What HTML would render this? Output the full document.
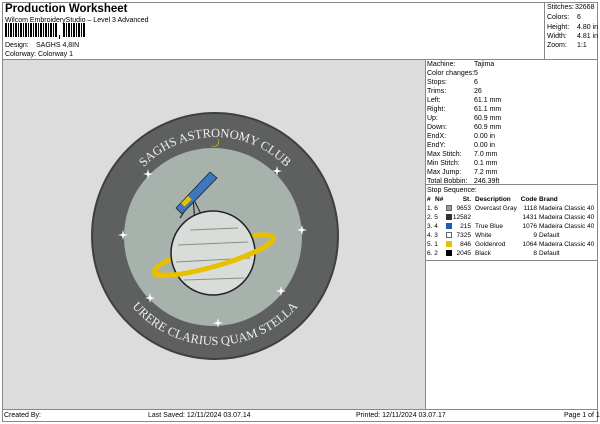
<!DOCTYPE html>
<html><head><meta charset="utf-8"><style>
*{margin:0;padding:0;box-sizing:border-box}
body{width:600px;height:424px;background:#fff;position:relative;overflow:hidden;font-family:"Liberation Sans",sans-serif;color:#000;font-size:7px}
.a{position:absolute;white-space:nowrap;line-height:9px}
.ln{position:absolute;background:#888}
.r{text-align:right}
.sm{font-size:6.5px}
</style></head><body>
<div class="ln" style="left:2px;top:2px;width:596px;height:1px"></div>
<div class="ln" style="left:2px;top:2px;width:1px;height:420px"></div>
<div class="ln" style="left:597px;top:2px;width:1px;height:420px"></div>
<div class="ln" style="left:2px;top:421px;width:596px;height:1px"></div>
<div class="ln" style="left:2px;top:59px;width:596px;height:1px"></div>
<div class="ln" style="left:2px;top:409px;width:596px;height:1px"></div>
<div class="ln" style="left:544px;top:2px;width:1px;height:57px"></div>
<div style="position:absolute;left:3px;top:60px;width:422px;height:349px;background:#dcdcdc"></div>
<div class="ln" style="left:425px;top:60px;width:1px;height:349px"></div>

<div class="a" style="left:5px;top:3px;font-size:11.5px;font-weight:bold;line-height:13px">Production Worksheet</div>
<div class="a" style="left:5px;top:16px">Wilcom EmbroideryStudio – Level 3 Advanced</div>
<svg style="position:absolute;left:5px;top:23px" width="82" height="16">
<g fill="#000">
<rect x="0" y="0" width="2" height="14"/><rect x="3" y="0" width="1" height="14"/><rect x="5" y="0" width="2" height="14"/><rect x="8" y="0" width="1" height="14"/><rect x="10" y="0" width="2" height="14"/><rect x="13" y="0" width="1" height="14"/><rect x="15" y="0" width="2" height="14"/><rect x="18" y="0" width="1" height="14"/><rect x="20" y="0" width="2" height="14"/><rect x="23" y="0" width="1" height="14"/><rect x="25" y="0" width="2" height="14"/><rect x="28" y="0" width="1" height="14"/><rect x="30" y="0" width="2" height="14"/><rect x="33" y="0" width="1" height="14"/><rect x="35" y="0" width="2" height="14"/><rect x="38" y="0" width="1" height="14"/><rect x="40" y="0" width="2" height="14"/><rect x="43" y="0" width="1" height="14"/><rect x="45" y="0" width="2" height="14"/><rect x="48" y="0" width="1" height="14"/><rect x="50" y="0" width="2" height="14"/><rect x="54" y="12" width="1" height="4"/><rect x="58" y="0" width="2" height="14"/><rect x="61" y="0" width="1" height="14"/><rect x="63" y="0" width="2" height="14"/><rect x="66" y="0" width="1" height="14"/><rect x="68" y="0" width="2" height="14"/><rect x="71" y="0" width="1" height="14"/><rect x="73" y="0" width="2" height="14"/><rect x="76" y="0" width="1" height="14"/><rect x="78" y="0" width="2" height="14"/>
</g></svg>
<div class="a" style="left:5px;top:41px">Design:</div><div class="a" style="left:36px;top:41px">SAGHS 4,8IN</div>
<div class="a" style="left:5px;top:50px">Colorway:</div><div class="a" style="left:38px;top:50px">Colorway 1</div>

<div class="a" style="left:547px;top:3px">Stitches:</div><div class="a" style="left:575px;top:3px">32668</div>
<div class="a" style="left:547px;top:13px">Colors:</div><div class="a" style="left:577px;top:13px">6</div>
<div class="a" style="left:547px;top:23px">Height:</div><div class="a" style="left:577px;top:23px">4.80 in</div>
<div class="a" style="left:547px;top:32px">Width:</div><div class="a" style="left:577px;top:32px">4.81 in</div>
<div class="a" style="left:547px;top:41px">Zoom:</div><div class="a" style="left:577px;top:41px">1:1</div>

<div style="position:absolute;left:427px;top:60px">
<div class="a" style="left:0;top:0">Machine:</div><div class="a" style="left:47px;top:0">Tajima</div>
<div class="a" style="left:0;top:9px">Color changes:</div><div class="a" style="left:47px;top:9px">5</div>
<div class="a" style="left:0;top:18px">Stops:</div><div class="a" style="left:47px;top:18px">6</div>
<div class="a" style="left:0;top:27px">Trims:</div><div class="a" style="left:47px;top:27px">26</div>
<div class="a" style="left:0;top:36px">Left:</div><div class="a" style="left:47px;top:36px">61.1 mm</div>
<div class="a" style="left:0;top:45px">Right:</div><div class="a" style="left:47px;top:45px">61.1 mm</div>
<div class="a" style="left:0;top:54px">Up:</div><div class="a" style="left:47px;top:54px">60.9 mm</div>
<div class="a" style="left:0;top:63px">Down:</div><div class="a" style="left:47px;top:63px">60.9 mm</div>
<div class="a" style="left:0;top:72px">EndX:</div><div class="a" style="left:47px;top:72px">0.00 in</div>
<div class="a" style="left:0;top:81px">EndY:</div><div class="a" style="left:47px;top:81px">0.00 in</div>
<div class="a" style="left:0;top:90px">Max Stitch:</div><div class="a" style="left:47px;top:90px">7.0 mm</div>
<div class="a" style="left:0;top:99px">Min Stitch:</div><div class="a" style="left:47px;top:99px">0.1 mm</div>
<div class="a" style="left:0;top:108px">Max Jump:</div><div class="a" style="left:47px;top:108px">7.2 mm</div>
<div class="a" style="left:0;top:117px">Total Bobbin:</div><div class="a" style="left:47px;top:117px">246.39ft</div>
</div>
<div class="ln" style="left:426px;top:184px;width:172px;height:1px"></div>
<div class="a" style="left:427px;top:186px">Stop Sequence:</div>
<div class="sm" style="position:absolute;left:427px;top:195px;font-weight:bold;text-decoration:underline">
<div class="a" style="left:0">#</div><div class="a" style="left:8px">N#</div><div class="a r" style="left:24px;width:20px">St.</div><div class="a" style="left:48px">Description</div><div class="a r" style="left:90px;width:20px">Code</div><div class="a" style="left:112px">Brand</div>
</div>
<div class="sm" style="position:absolute;left:427px;top:204px">
<div class="a" style="left:0;top:0">1. 6</div><div style="position:absolute;left:19px;top:1px;width:6px;height:6px;background:#999;border:1px solid #666"></div><div class="a r" style="left:19px;top:0;width:25px">9653</div><div class="a" style="left:48px;top:0">Overcast Gray</div><div class="a r" style="left:85px;top:0;width:25px">1118</div><div class="a" style="left:112px;top:0">Madeira Classic 40</div>
<div class="a" style="left:0;top:9px">2. 5</div><div style="position:absolute;left:19px;top:10px;width:6px;height:6px;background:#333"></div><div class="a r" style="left:19px;top:9px;width:25px">12582</div><div class="a r" style="left:85px;top:9px;width:25px">1431</div><div class="a" style="left:112px;top:9px">Madeira Classic 40</div>
<div class="a" style="left:0;top:18px">3. 4</div><div style="position:absolute;left:19px;top:19px;width:6px;height:6px;background:#1f5fb0"></div><div class="a r" style="left:19px;top:18px;width:25px">215</div><div class="a" style="left:48px;top:18px">True Blue</div><div class="a r" style="left:85px;top:18px;width:25px">1076</div><div class="a" style="left:112px;top:18px">Madeira Classic 40</div>
<div class="a" style="left:0;top:27px">4. 3</div><div style="position:absolute;left:19px;top:28px;width:6px;height:6px;background:#fff;border:1px solid #666"></div><div class="a r" style="left:19px;top:27px;width:25px">7325</div><div class="a" style="left:48px;top:27px">White</div><div class="a r" style="left:85px;top:27px;width:25px">9</div><div class="a" style="left:112px;top:27px">Default</div>
<div class="a" style="left:0;top:36px">5. 1</div><div style="position:absolute;left:19px;top:37px;width:6px;height:6px;background:#e8c000"></div><div class="a r" style="left:19px;top:36px;width:25px">846</div><div class="a" style="left:48px;top:36px">Goldenrod</div><div class="a r" style="left:85px;top:36px;width:25px">1064</div><div class="a" style="left:112px;top:36px">Madeira Classic 40</div>
<div class="a" style="left:0;top:45px">6. 2</div><div style="position:absolute;left:19px;top:46px;width:6px;height:6px;background:#000"></div><div class="a r" style="left:19px;top:45px;width:25px">2045</div><div class="a" style="left:48px;top:45px">Black</div><div class="a r" style="left:85px;top:45px;width:25px">8</div><div class="a" style="left:112px;top:45px">Default</div>
</div>
<div class="ln" style="left:426px;top:260px;width:172px;height:1px"></div>

<div class="a" style="left:4px;top:411px">Created By:</div>
<div class="a" style="left:148px;top:411px">Last Saved: 12/11/2024 03.07.14</div>
<div class="a" style="left:356px;top:411px">Printed: 12/11/2024 03.07.17</div>
<div class="a" style="left:564px;top:411px">Page 1 of 1</div>

<svg style="position:absolute;left:0;top:0" width="600" height="424">
<defs>
<path id="tp" d="M 116 236 A 99 99 0 0 1 314 236"/>
<path id="bp" d="M 106 236 A 109 109 0 0 0 324 236"/>
<g id="st"><path d="M0 -5 L1 -1 L5 0 L1 1 L0 5 L-1 1 L-5 0 L-1 -1Z" fill="#fff"/></g>
</defs>
<circle cx="215" cy="236" r="123" fill="#5d605e" stroke="#3e403f" stroke-width="2"/>
<circle cx="213" cy="237" r="89" fill="#a7b2ad"/>
<text font-family="Liberation Serif,serif" font-size="12.5" fill="#eee"><textPath href="#tp" startOffset="50%" text-anchor="middle">SAGHS ASTRONOMY CLUB</textPath></text>
<text font-family="Liberation Serif,serif" font-size="12.5" fill="#eee"><textPath href="#bp" startOffset="50%" text-anchor="middle">URERE CLARIUS QUAM STELLA</textPath></text>
<path d="M217 138 a5 5 0 1 1 -7 7 a4 4 0 0 0 7 -7z" fill="#e8c000"/>
<use href="#st" x="148" y="174"/><use href="#st" x="277" y="171"/><use href="#st" x="123" y="235"/><use href="#st" x="302" y="230"/><use href="#st" x="150" y="298"/><use href="#st" x="281" y="291"/><use href="#st" x="218" y="323"/>
<ellipse cx="214" cy="255" rx="62" ry="11" transform="rotate(-16 214 255)" fill="none" stroke="#e8c000" stroke-width="5"/>
<g stroke="#2b2b2b" stroke-width="1.2"><line x1="193" y1="198" x2="180" y2="218"/><line x1="193" y1="198" x2="207" y2="226"/><line x1="193" y1="198" x2="195" y2="222"/></g>
<path d="M176 208 L210 172 L217 178 L182 214Z" fill="#3a78c0" stroke="#222" stroke-width="0.8"/>
<rect x="181" y="199" width="10" height="5" fill="#e8c000" transform="rotate(-45 186 201)"/>
<circle cx="213" cy="253" r="42" fill="#d9ddda" stroke="#222" stroke-width="1.5"/>
<g stroke="#8a8e8b" stroke-width="1"><line x1="190" y1="230" x2="238" y2="228"/><line x1="178" y1="245" x2="248" y2="242"/><line x1="176" y1="262" x2="250" y2="258"/><line x1="184" y1="280" x2="244" y2="278"/></g>
<path d="M154 274 A62 11 -16 0 0 272 240" fill="none" stroke="#e8c000" stroke-width="5"/>
</svg>
</body></html>
